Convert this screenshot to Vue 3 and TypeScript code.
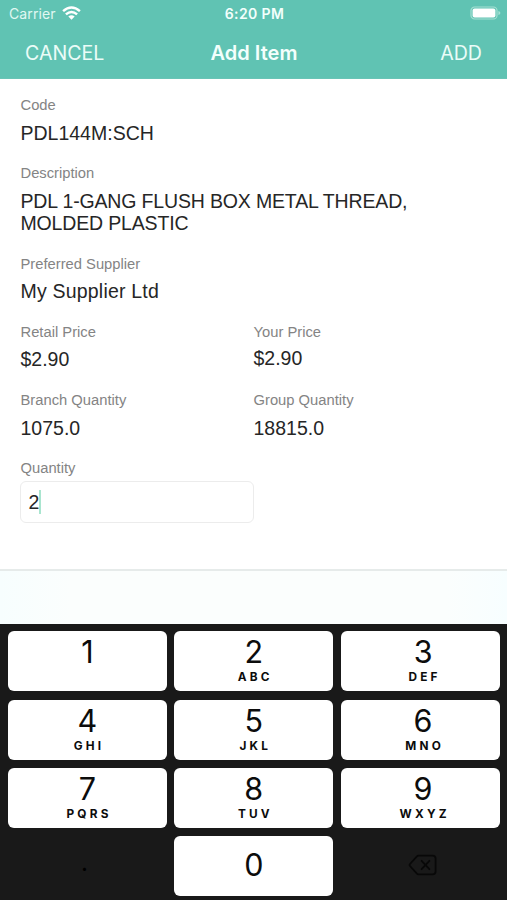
<script setup lang="ts">
import { ref } from 'vue'

interface Field {
  label: string
  value: string
  tone?: 'raised' | 'tight' | 'wide'
}

interface Key {
  digit: string
  letters?: string
}

const rows: Field[][] = [
  [{ label: 'Code', value: 'PDL144M:SCH' }],
  [{ label: 'Description', value: 'PDL 1-GANG FLUSH BOX METAL THREAD,\nMOLDED PLASTIC', tone: 'tight' }],
  [{ label: 'Preferred Supplier', value: 'My Supplier Ltd', tone: 'wide' }],
  [
    { label: 'Retail Price', value: '$2.90' },
    { label: 'Your Price', value: '$2.90', tone: 'raised' },
  ],
  [
    { label: 'Branch Quantity', value: '1075.0' },
    { label: 'Group Quantity', value: '18815.0' },
  ],
]

const keys: Key[] = [
  { digit: '1' },
  { digit: '2', letters: 'ABC' },
  { digit: '3', letters: 'DEF' },
  { digit: '4', letters: 'GHI' },
  { digit: '5', letters: 'JKL' },
  { digit: '6', letters: 'MNO' },
  { digit: '7', letters: 'PQRS' },
  { digit: '8', letters: 'TUV' },
  { digit: '9', letters: 'WXYZ' },
]

const quantity = ref('2')

function press(digit: string) {
  quantity.value += digit
}

function addPoint() {
  if (!quantity.value.includes('.')) quantity.value += '.'
}

function erase() {
  quantity.value = quantity.value.slice(0, -1)
}
</script>

<template>
  <div class="screen">
    <header class="header">
      <div class="status">
        <div class="carrier">
          <span>Carrier</span>
          <svg class="wifi" viewBox="0 0 20 15" width="19" height="14">
            <path d="M1 5.5 Q10 -2.3 19 5.5" />
            <path d="M4 9 Q10 3.8 16 9" />
            <path class="dot" d="M6.6 11.2 Q10 8.6 13.4 11.2 L10 14.8 Z" />
          </svg>
        </div>
        <div class="time">6:20 PM</div>
        <div class="power">
          <svg viewBox="0 0 31 14" width="31" height="14">
            <rect class="shell" x="1" y="1" width="26" height="12" rx="3.6" />
            <rect class="charge" x="2.6" y="2.6" width="22.8" height="8.8" rx="2" />
            <path class="tip" d="M28.4 5 Q30.4 5.6 30.4 7 Q30.4 8.4 28.4 9 Z" />
          </svg>
        </div>
      </div>
      <nav class="nav">
        <button class="action cancel">CANCEL</button>
        <h1 class="title">Add Item</h1>
        <button class="action add">ADD</button>
      </nav>
    </header>

    <main class="form">
      <div v-for="(row, i) in rows" :key="i" class="row">
        <div v-for="field in row" :key="field.label" class="field">
          <div class="label">{{ field.label }}</div>
          <div class="value" :class="field.tone">{{ field.value }}</div>
        </div>
      </div>
      <div class="label">Quantity</div>
      <div class="input"><span>{{ quantity }}</span><i class="caret"></i></div>
    </main>

    <div class="accessory"></div>

    <section class="keypad">
      <button v-for="key in keys" :key="key.digit" class="key" @click="press(key.digit)">
        <span class="digit">{{ key.digit }}</span>
        <span v-if="key.letters" class="letters">{{ key.letters }}</span>
      </button>
      <button class="key plain dot-key" @click="addPoint"><span class="point">.</span></button>
      <button class="key zero" @click="press('0')"><span class="digit">0</span></button>
      <button class="key plain" @click="erase">
        <svg class="erase" viewBox="0 0 30 22" width="30" height="22">
          <path d="M10.5 1.7 H24.5 Q27.6 1.7 27.6 4.8 V17.2 Q27.6 20.3 24.5 20.3 H10.5 Q9.6 20.3 8.9 19.6 L2 12 Q1.1 11 2 10 L8.9 2.4 Q9.6 1.7 10.5 1.7 Z" />
          <path d="M13.6 6.8 L21.4 15.2 M21.4 6.8 L13.6 15.2" />
        </svg>
      </button>
    </section>
  </div>
</template>

<style>
body {
  margin: 0;
  background: #fff;
}
</style>

<style scoped>
.screen {
  width: 507px;
  height: 900px;
  overflow: hidden;
  display: flex;
  flex-direction: column;
  background: #fff;
  font-family: 'Liberation Sans', Arial, sans-serif;
}

button {
  border: 0;
  padding: 0;
  margin: 0;
  background: none;
  font: inherit;
  color: inherit;
}

.header {
  height: 79px;
  flex: none;
  box-sizing: border-box;
  background: #60c3b3;
  border-bottom: 1px solid #69c4b6;
  color: #f3fffc;
  font-family: Inter, sans-serif;
}

.status {
  height: 27px;
  display: grid;
  grid-template-columns: 1fr auto 1fr;
  align-items: center;
  padding: 0 7px 0 9px;
  font-size: 14px;
}

.carrier {
  display: flex;
  align-items: center;
  gap: 6px;
  color: #e0f8f2;
  letter-spacing: 0.1px;
}

.wifi {
  margin-top: -1px;
}

.wifi path {
  fill: none;
  stroke: #fff;
  stroke-width: 2.7;
}

.wifi .dot {
  fill: #fff;
  stroke: none;
}

.time {
  font-weight: 600;
  font-size: 14px;
  letter-spacing: 0.4px;
}

.power {
  display: flex;
  justify-content: flex-end;
  margin: -1px -1px 0 0;
}

.shell {
  fill: none;
  stroke: #a5e0d3;
  stroke-width: 1.2;
}

.charge {
  fill: #fff;
}

.tip {
  fill: #a5e0d3;
}

.nav {
  height: 51px;
  display: grid;
  grid-template-columns: 1fr auto 1fr;
  align-items: center;
  padding: 0 25px;
}

.action {
  font-size: 19.6px;
  font-weight: 400;
  letter-spacing: 0;
  color: #ebfcf8;
}

.cancel {
  justify-self: start;
}

.add {
  justify-self: end;
}

.title {
  margin: 0;
  padding-left: 1px;
  font-size: 20px;
  font-weight: 600;
}

.form {
  height: 490px;
  flex: none;
  box-sizing: border-box;
  padding: 17.3px 20.5px 0;
}

.row {
  display: grid;
  grid-template-columns: 233px 233px;
}

.row:has(.field:only-child) {
  grid-template-columns: 1fr;
}

.field {
  padding-bottom: 20.2px;
}

.label {
  height: 18px;
  line-height: 18px;
  font-size: 14.75px;
  color: #848484;
}

.value {
  margin-top: 7.5px;
  line-height: 22.4px;
  font-size: 19.5px;
  color: #262626;
  white-space: pre;
}

.value.raised {
  margin-top: 6px;
}

.value.tight {
  letter-spacing: -0.16px;
}

.value.wide {
  letter-spacing: 0.2px;
}

.input {
  width: 234px;
  height: 42px;
  margin: 4px 0 0 -0.5px;
  box-sizing: border-box;
  border: 1px solid #ececec;
  border-radius: 6px;
  padding: 1px 0 0 7.5px;
  display: flex;
  align-items: center;
  font-size: 19.5px;
  color: #262626;
}

.caret {
  width: 2px;
  height: 24px;
  margin: -2px 0 0 -0.5px;
  background: #a9e5cf;
}

.accessory {
  height: 55px;
  flex: none;
  box-sizing: border-box;
  border-top: 2px solid #e6ebea;
  background: linear-gradient(90deg, #f7fefe, #fbfefd 14%, #fbfefd 88%, #f7feff);
}

.keypad {
  flex: 1;
  background: #191919;
  display: grid;
  grid-template-columns: repeat(3, 1fr);
  grid-auto-rows: 60px;
  align-content: start;
  gap: 8.4px 7.4px;
  padding: 7.2px 7.5px 0 8px;
  font-family: Inter, sans-serif;
  color: #0c0c0c;
}

.key {
  display: flex;
  flex-direction: column;
  align-items: center;
  background: #fff;
  border-radius: 6px;
}

.key:nth-child(3n) {
  padding-left: 6px;
}

.digit {
  margin-top: 3px;
  height: 36px;
  line-height: 36px;
  font-size: 30.5px;
  font-weight: 400;
}

.letters {
  height: 14px;
  line-height: 14px;
  font-size: 11.8px;
  font-weight: 650;
  letter-spacing: 3.2px;
  margin-right: -3.2px;
}

.zero {
  justify-content: center;
}

.zero .digit {
  margin-top: -2px;
}

.plain {
  background: none;
  justify-content: center;
  color: #000;
}

.dot-key {
  padding-right: 6px;
}

.point {
  font-size: 24px;
  line-height: 30px;
  margin-top: -6px;
}

.erase {
  margin-top: -3px;
}

.erase path {
  fill: none;
  stroke: #080808;
  stroke-width: 1.8;
  stroke-linecap: round;
  stroke-linejoin: round;
}
</style>
